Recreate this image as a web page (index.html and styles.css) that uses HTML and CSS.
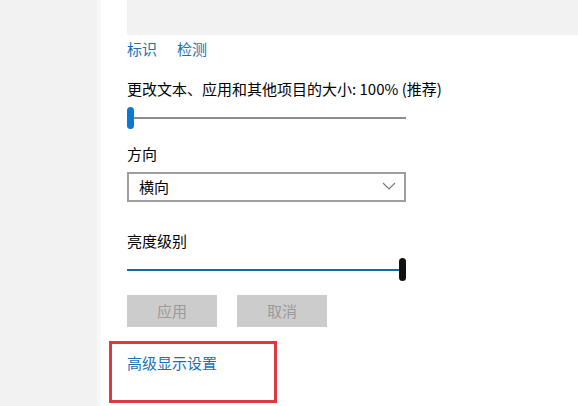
FILE: index.html
```html
<!DOCTYPE html>
<html lang="zh-CN">
<head>
<meta charset="utf-8">
<title>显示设置</title>
<link rel="stylesheet" href="styles.css">
</head>
<body>
<div class="sidebar"></div>
<div class="main">
  <div class="preview"></div>
  <div class="links">
    <a class="link">标识</a>
    <a class="link">检测</a>
  </div>
  <div class="label">更改文本、应用和其他项目的大小: 100% (推荐)</div>
  <div class="slider scale">
    <div class="thumb"></div>
    <div class="track"></div>
  </div>
  <div class="label label-orient">方向</div>
  <div class="select">
    <span>横向</span>
    <svg class="chev" width="14" height="8" viewBox="0 0 14 8"><path d="M1 1 L7 7 L13 1" fill="none" stroke="#7a7a7a" stroke-width="1.2"/></svg>
  </div>
  <div class="label label-bright">亮度级别</div>
  <div class="slider bright">
    <div class="track"></div>
    <div class="thumb"></div>
  </div>
  <div class="buttons">
    <div class="btn">应用</div>
    <div class="btn">取消</div>
  </div>
  <div class="highlight">
    <a class="link">高级显示设置</a>
  </div>
</div>
</body>
</html>
```
FILE: styles.css
```css
html, body {
  margin: 0;
  padding: 0;
  background: #ffffff;
}
body {
  display: flex;
  width: 578px;
  height: 406px;
  overflow: hidden;
  font-family: "Noto Sans CJK SC", "Noto Sans", sans-serif;
  font-size: 15px;
  line-height: 20px;
  color: #000000;
}
.sidebar {
  width: 97px;
  flex: none;
  background: #f2f2f2;
  border-right: 4px solid #f8f8f8;
}
.main {
  flex: 1;
  display: flex;
  flex-direction: column;
  padding-left: 26px;
}
.preview {
  height: 35px;
  background: #f2f2f2;
}
.links {
  display: flex;
  gap: 20px;
  margin-top: 4px;
}
.link {
  color: #1c6fb5;
  text-decoration: none;
}
.label {
  margin-top: 20px;
}
.slider {
  display: flex;
  align-items: center;
  height: 22px;
}
.scale {
  width: 279px;
  margin-top: 8px;
}
.scale .thumb {
  width: 7px;
  height: 22px;
  border-radius: 4px;
  background: #0a78d4;
  flex: none;
}
.scale .track {
  flex: 1;
  height: 2px;
  background: #8c8c8c;
}
.label-orient {
  margin-top: 15px;
}
.select {
  margin-top: 8px;
  width: 279px;
  height: 30px;
  border: 2px solid #9e9e9e;
  display: flex;
  align-items: center;
  justify-content: space-between;
  padding: 0 8px 0 10px;
  box-sizing: border-box;
}
.chev {
  margin-top: -2px;
}
.label-bright {
  margin-top: 29px;
}
.bright {
  width: 279px;
  height: 23px;
  margin-top: 7px;
}
.bright .track {
  flex: 1;
  height: 2px;
  background: #1a6a9c;
}
.bright .thumb {
  width: 7px;
  height: 23px;
  border-radius: 4px;
  background: #111111;
  flex: none;
}
.buttons {
  display: flex;
  gap: 20px;
  margin-top: 14px;
}
.btn {
  width: 90px;
  height: 32px;
  background: #cccccc;
  color: #9a9a9a;
  display: flex;
  align-items: center;
  justify-content: center;
}
.highlight {
  margin-top: 14px;
  margin-left: -18px;
  border: 3px solid #e0383f;
  padding: 9px 0 0 15px;
  box-sizing: border-box;
  width: 168px;
  height: 62px;
}
```
